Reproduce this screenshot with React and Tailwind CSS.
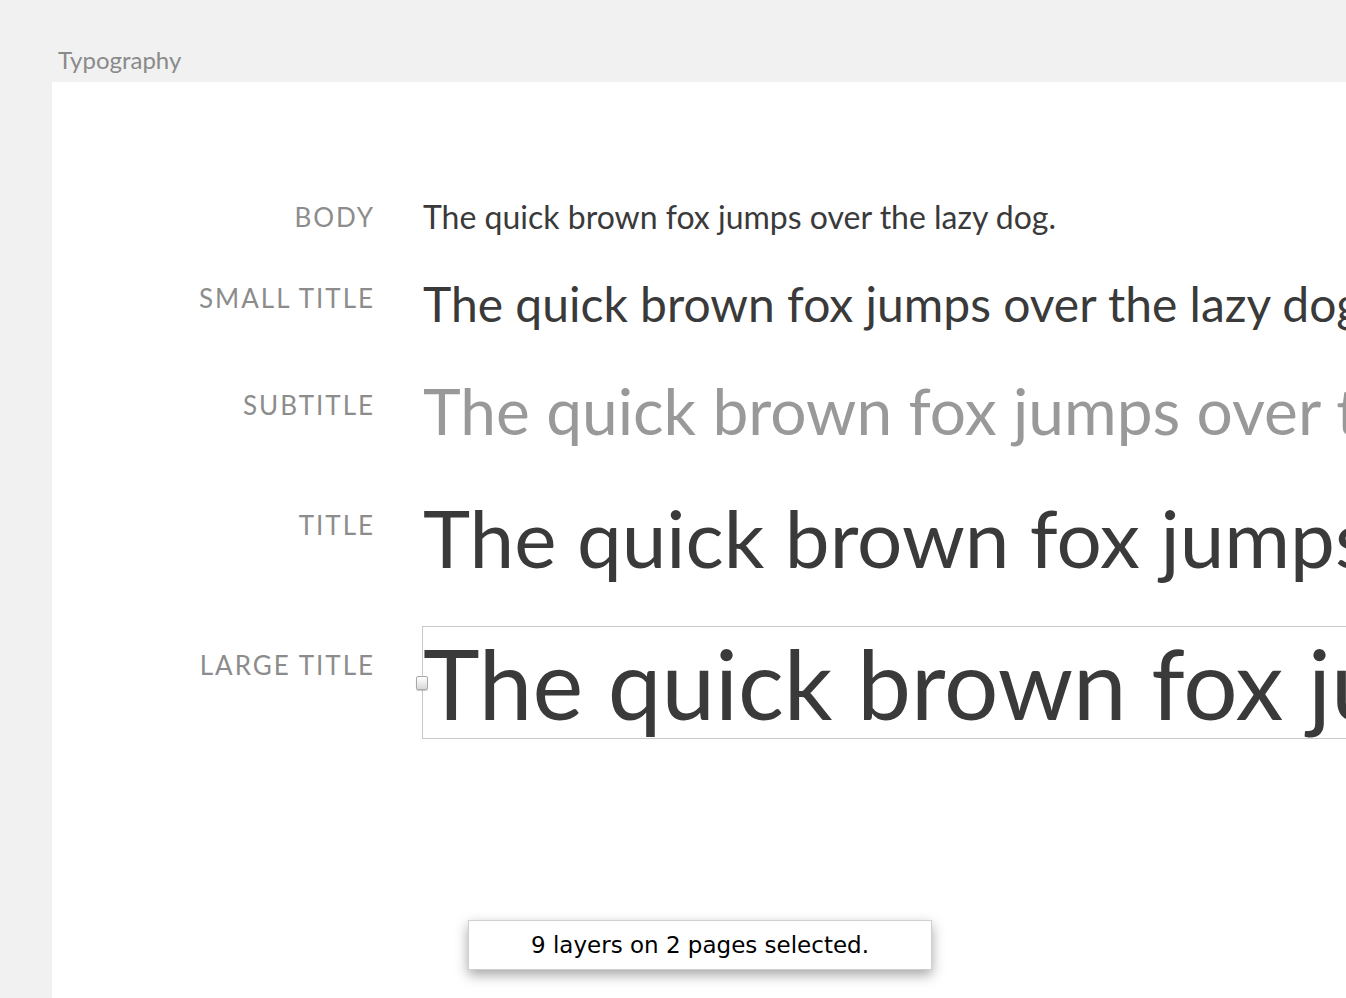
import React from 'react';

const rows = [
  { label: 'BODY', size: 'text-[32px] leading-[1.2]', color: 'text-[#3a3a3a]', mt: 'mt-0', lpt: 'pt-[4px]' },
  { label: 'SMALL TITLE', size: 'text-[48px] leading-[1.2]', color: 'text-[#3a3a3a]', mt: 'mt-[39px]', lpt: 'pt-[8px]' },
  { label: 'SUBTITLE', size: 'text-[64px] leading-[1.2]', color: 'text-[#999999]', mt: 'mt-[40px]', lpt: 'pt-[17px]' },
  { label: 'TITLE', size: 'text-[80px] leading-[1.2]', color: 'text-[#3a3a3a]', mt: 'mt-[39px]', lpt: 'pt-[21px]' },
];

const Row = ({ label, children, mt, lpt }) => (
  <div className={`flex items-start ${mt}`}>
    <div className={`w-[323px] shrink-0 text-right text-[26px] leading-[1.2] tracking-[2px] text-[#8c8c8c] ${lpt}`}>
      {label}
    </div>
    <div className="ml-[48px] flex-1 min-w-0">{children}</div>
  </div>
);

export default function App() {
  const sample = 'The quick brown fox jumps over the lazy dog.';
  return (
    <div
      className="relative w-[1346px] h-[998px] overflow-hidden bg-[#f1f1f1]"
      style={{ fontFamily: 'Lato, "Noto Sans", sans-serif' }}
    >
      <div className="pl-[58px] pt-[46px] h-[82px] text-[24px] leading-[1.2] text-[#8a8a8a]">Typography</div>
      <div className="ml-[52px] h-[916px] bg-white pt-[116px]">
        {rows.map((r) => (
          <Row key={r.label} label={r.label} mt={r.mt} lpt={r.lpt}>
            <div className={`${r.size} ${r.color} whitespace-nowrap`}>{sample}</div>
          </Row>
        ))}
        <Row label="LARGE TITLE" mt="mt-[41px]" lpt="pt-[24px]">
          {/* selected text layer, wider than the viewport */}
          <div className="relative -ml-px w-[2200px] border border-[#c9c9c9] h-[113px]">
            <div className="text-[96px] leading-[111px] text-[#3a3a3a] whitespace-nowrap">{sample}</div>
            <div className="absolute left-[-7px] top-[49px] w-[12px] h-[14px] rounded-[2px] border border-[#a8a8a8] bg-gradient-to-b from-white to-[#d8d8d8] shadow-[0_1px_1px_rgba(0,0,0,0.2)]" />
          </div>
        </Row>
      </div>
      <div
        className="absolute left-[468px] top-[920px] w-[464px] h-[50px] flex items-center justify-center bg-white border border-[#cfcfcf] shadow-[0_5px_12px_rgba(0,0,0,0.35)] text-[23px] text-black"
        style={{ fontFamily: '"DejaVu Sans", sans-serif' }}
      >
        9 layers on 2 pages selected.
      </div>
    </div>
  );
}
